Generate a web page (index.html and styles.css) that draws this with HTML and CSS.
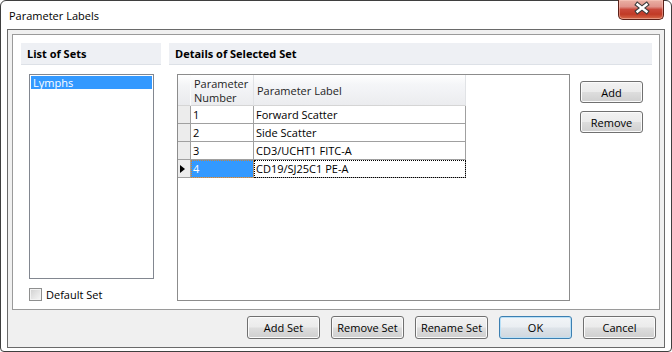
FILE: index.html
```html
<!DOCTYPE html>
<html lang="en">
<head>
<meta charset="utf-8">
<title>Parameter Labels</title>
<link rel="stylesheet" href="styles.css">
</head>
<body>
<div class="window">
  <div class="titlebar"><span class="title">Parameter Labels</span></div>
  <div class="close">
    <svg class="close-x" width="44" height="18" viewBox="0 0 44 18">
      <path d="M18.5 4.5 L27.5 11.5 M27.5 4.5 L18.5 11.5" stroke="#3b3b3b" stroke-width="4.6" stroke-linecap="square" fill="none"/>
      <path d="M18.5 4.5 L27.5 11.5 M27.5 4.5 L18.5 11.5" stroke="#ffffff" stroke-width="2.4" stroke-linecap="square" fill="none"/>
    </svg>
  </div>
  <div class="client">
    <div class="panel">
      <div class="col col-left">
        <div class="head">List of Sets</div>
        <div class="listbox">
          <div class="list-item selected">Lymphs</div>
        </div>
        <div class="check">
          <span class="check-box"></span>
          <span class="check-label">Default Set</span>
        </div>
      </div>
      <div class="col col-right">
        <div class="head">Details of Selected Set</div>
        <div class="details">
          <div class="grid">
            <div class="row row-head">
              <div class="rh"></div>
              <div class="c1 hcell"><span class="hline">Parameter</span><span class="hline">Number</span></div>
              <div class="c2 hcell">Parameter Label</div>
            </div>
            <div class="row">
              <div class="rh"></div>
              <div class="c1 cell">1</div>
              <div class="c2 cell">Forward Scatter</div>
            </div>
            <div class="row">
              <div class="rh"></div>
              <div class="c1 cell">2</div>
              <div class="c2 cell">Side Scatter</div>
            </div>
            <div class="row">
              <div class="rh"></div>
              <div class="c1 cell">3</div>
              <div class="c2 cell">CD3/UCHT1 FITC-A</div>
            </div>
            <div class="row">
              <div class="rh current"><span class="arrow"></span></div>
              <div class="c1 cell cell-sel">4</div>
              <div class="c2 cell cell-focus">CD19/SJ25C1 PE-A</div>
            </div>
          </div>
          <div class="side-buttons">
            <button class="btn btn-side">Add</button>
            <button class="btn btn-side">Remove</button>
          </div>
        </div>
      </div>
    </div>
    <div class="footer">
      <button class="btn">Add Set</button>
      <button class="btn">Remove Set</button>
      <button class="btn">Rename Set</button>
      <button class="btn btn-default">OK</button>
      <button class="btn">Cancel</button>
    </div>
  </div>
</div>
</body>
</html>
```

FILE: styles.css
```css
html, body {
  margin: 0;
  padding: 0;
  background: #ffffff;
}

body {
  font-family: "Open Sans", "Noto Sans", sans-serif;
  font-size: 11px;
  color: #000;
}

.window {
  position: relative;
  box-sizing: border-box;
  width: 672px;
  height: 352px;
  border: 1px solid #3f3f3f;
  border-radius: 6px 6px 4px 4px;
  background: #ffffff;
  padding: 0 6px 3px 6px;
  display: flex;
  flex-direction: column;
}

.titlebar {
  height: 28px;
  display: flex;
  align-items: center;
  padding-left: 2px;
}

.title {
  font-size: 11px;
  color: #000;
}

.close {
  position: absolute;
  top: -1px;
  right: 7px;
  box-sizing: border-box;
  width: 46px;
  height: 20px;
  border: 1px solid #5b2018;
  border-top: none;
  border-radius: 0 0 5px 5px;
  background: linear-gradient(#eab1a4 0%, #e0938a 35%, #c9483a 50%, #c13a26 75%, #d66a4a 100%);
  box-shadow: inset 0 0 0 1px rgba(255, 210, 200, 0.45);
}

.close-x {
  display: block;
}

.client {
  flex: 1;
  box-sizing: border-box;
  border: 1px solid #6a6a6a;
  background: #f0f0f0;
  display: flex;
  flex-direction: column;
}

.panel {
  box-sizing: border-box;
  height: 276px;
  margin: 4px 4px 0 4px;
  border: 1px solid #9a9a9a;
  background: #ffffff;
  display: flex;
  gap: 8px;
  padding: 8px 7px 0 8px;
}

.col {
  display: flex;
  flex-direction: column;
}

.col-left {
  width: 140px;
}

.col-right {
  flex: 1;
}

.head {
  height: 21px;
  line-height: 21px;
  border-bottom: 1px solid #dde1e7;
  background: #eef0f4;
  font-weight: bold;
  padding-left: 6px;
}

.listbox {
  box-sizing: border-box;
  width: 125px;
  height: 205px;
  margin: 9px 0 0 8px;
  border: 1px solid #828790;
  background: #fff;
  padding: 1px;
}

.list-item {
  height: 13px;
  line-height: 13px;
  padding-left: 2px;
}

.list-item.selected {
  background: #3399ff;
  color: #fff;
}

.check {
  display: flex;
  align-items: center;
  gap: 4px;
  margin: 9px 0 0 8px;
  height: 13px;
}

.check-box {
  box-sizing: border-box;
  width: 13px;
  height: 13px;
  border: 1px solid #8e8f8f;
  background: linear-gradient(135deg, #cfcfcf 0%, #e4e4e4 50%, #f7f7f7 100%);
  box-shadow: inset 0 0 0 1px #f3f3f3;
}

.details {
  display: flex;
  gap: 10px;
  margin-top: 9px;
  padding-left: 8px;
}

.grid {
  box-sizing: border-box;
  width: 393px;
  height: 227px;
  border: 1px solid #8c8c8c;
  background: #fff;
}

.row {
  display: flex;
  height: 18px;
}

.row-head {
  height: 31px;
}

.rh {
  box-sizing: border-box;
  width: 13px;
  border-right: 1px solid #a0a0a0;
  border-bottom: 1px solid #a0a0a0;
  background: #ececec;
  display: flex;
  align-items: center;
  padding-left: 2px;
}

.row-head .rh {
  border-right: 1px solid #fbfbfb;
  border-bottom: 1px solid #d5d5d5;
  background: linear-gradient(#ffffff 0%, #f3f4f6 35%, #e9eaed 100%);
}

.c1 {
  width: 63px;
}

.c2 {
  width: 212px;
}

.hcell {
  box-sizing: border-box;
  display: flex;
  align-items: center;
  padding-left: 3px;
  color: #1e1e1e;
  background: linear-gradient(#ffffff 0%, #f5f6f8 30%, #ebecef 100%);
  border-right: 1px solid #e1e3e6;
  border-bottom: 1px solid #d5d5d5;
}

.c1.hcell {
  flex-direction: column;
  align-items: flex-start;
  justify-content: center;
  gap: 1px;
}

.hline {
  display: block;
  height: 13px;
  line-height: 13px;
}

.cell {
  box-sizing: border-box;
  display: flex;
  align-items: center;
  padding-left: 2px;
  border-right: 1px solid #a0a0a0;
  border-bottom: 1px solid #a0a0a0;
}

.cell-sel {
  background: #3399ff;
  color: #fff;
  outline: 1px dotted #c8843c;
  outline-offset: -1px;
}

.cell-focus {
  outline: 1px dotted #000;
  outline-offset: -1px;
}

.arrow {
  width: 0;
  height: 0;
  border-top: 4px solid transparent;
  border-bottom: 4px solid transparent;
  border-left: 5px solid #000;
}

.side-buttons {
  display: flex;
  flex-direction: column;
  gap: 8px;
  padding-top: 7px;
}

.btn {
  box-sizing: border-box;
  width: 73px;
  height: 23px;
  padding: 0;
  margin: 0;
  font-family: "Open Sans", "Noto Sans", sans-serif;
  font-size: 11px;
  color: #000;
  border: 1px solid #707070;
  border-radius: 3px;
  background: linear-gradient(#f2f2f2 0%, #ebebeb 48%, #dddddd 52%, #cfcfcf 100%);
  box-shadow: inset 0 0 0 1px #fbfbfb;
  display: flex;
  align-items: center;
  justify-content: center;
}

.btn-side {
  width: 63px;
  height: 22px;
}

.btn-default {
  border-color: #3c7fb1;
  box-shadow: inset 0 0 0 1px #b9e0f7;
  background: linear-gradient(#f2f5f8 0%, #eaeef2 48%, #dde3e9 52%, #d0d7de 100%);
}

.footer {
  flex: 1;
  display: flex;
  justify-content: flex-end;
  gap: 11px;
  padding: 6px 8px 0 0;
}
```
